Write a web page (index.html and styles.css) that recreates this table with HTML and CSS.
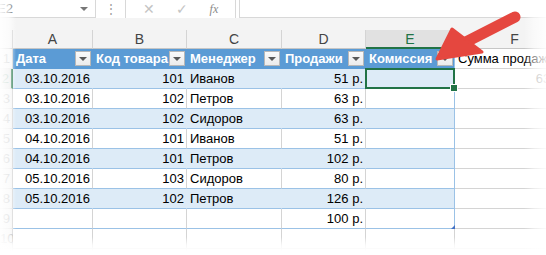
FILE: index.html
```html
<!DOCTYPE html>
<html lang="ru">
<head>
<meta charset="utf-8">
<link rel="stylesheet" href="styles.css">
</head>
<body>
<div class="page">
  <div class="fbar">
    <div class="namebox"><span class="nb-text">E2</span><span class="nb-arrow"></span></div>
    <div class="dots">⋮</div>
    <div class="fxbox"><span class="fxi">✕</span><span class="fxi">✓</span><span class="fxi fx">fx</span></div>
    <div class="finput"></div>
  </div>
  <div class="gap"></div>
  <div class="sheet">
    <div class="rh corner"></div>
    <div class="ch">A</div><div class="ch">B</div><div class="ch">C</div><div class="ch">D</div><div class="ch ch-sel">E</div><div class="ch">F</div>

    <div class="rh">1</div>
    <div class="c hdr"><span>Дата</span><span class="fb"></span></div>
    <div class="c hdr"><span>Код товара</span><span class="fb"></span></div>
    <div class="c hdr"><span>Менеджер</span><span class="fb"></span></div>
    <div class="c hdr"><span>Продажи</span><span class="fb"></span></div>
    <div class="c hdr hdr-last"><span>Комиссия</span><span class="fb"></span></div>
    <div class="c plain">Сумма продаж</div>

    <div class="rh rh-sel">2</div>
    <div class="c band r">03.10.2016</div><div class="c band r">101</div><div class="c band">Иванов</div><div class="c band r">51 р.</div><div class="c band last sel"></div><div class="c plain r ghost">630 р.</div>

    <div class="rh">3</div>
    <div class="c row r">03.10.2016</div><div class="c row r">102</div><div class="c row">Петров</div><div class="c row r">63 р.</div><div class="c row last"></div><div class="c plain"></div>

    <div class="rh">4</div>
    <div class="c band r">03.10.2016</div><div class="c band r">102</div><div class="c band">Сидоров</div><div class="c band r">63 р.</div><div class="c band last"></div><div class="c plain"></div>

    <div class="rh">5</div>
    <div class="c row r">04.10.2016</div><div class="c row r">101</div><div class="c row">Иванов</div><div class="c row r">51 р.</div><div class="c row last"></div><div class="c plain"></div>

    <div class="rh">6</div>
    <div class="c band r">04.10.2016</div><div class="c band r">101</div><div class="c band">Петров</div><div class="c band r">102 р.</div><div class="c band last"></div><div class="c plain"></div>

    <div class="rh">7</div>
    <div class="c row r">05.10.2016</div><div class="c row r">103</div><div class="c row">Сидоров</div><div class="c row r">80 р.</div><div class="c row last"></div><div class="c plain"></div>

    <div class="rh">8</div>
    <div class="c band r">05.10.2016</div><div class="c band r">102</div><div class="c band">Петров</div><div class="c band r">126 р.</div><div class="c band last"></div><div class="c plain"></div>

    <div class="rh">9</div>
    <div class="c row"></div><div class="c row"></div><div class="c row"></div><div class="c row r">100 р.</div><div class="c row last resize"></div><div class="c plain"></div>

    <div class="rh">10</div>
    <div class="c plain"></div><div class="c plain"></div><div class="c plain"></div><div class="c plain"></div><div class="c plain"></div><div class="c plain"></div>

    <div class="rh">11</div>
    <div class="c plain"></div><div class="c plain"></div><div class="c plain"></div><div class="c plain"></div><div class="c plain"></div><div class="c plain"></div>
  </div>

  <svg class="arrow" width="546" height="255" viewBox="0 0 546 255">
    <line x1="515" y1="17" x2="466" y2="42" stroke="#e5473f" stroke-width="11" stroke-linecap="round"/>
    <polygon points="452,29 437,59 482,52" fill="#e5473f" stroke="#e5473f" stroke-width="3" stroke-linejoin="round"/>
  </svg>
  <div class="fade fade-left"></div>
  <div class="fade fade-right"></div>
  <div class="fade fade-bottom"></div>
</div>
</body>
</html>
```
FILE: styles.css
```css
* { box-sizing: border-box; }
html, body { margin: 0; padding: 0; background: #fff; }
.page {
  position: relative;
  width: 546px;
  height: 255px;
  overflow: hidden;
  font-family: "Liberation Sans", Arial, sans-serif;
  font-size: 13px;
  color: #000;
}
.fbar {
  display: flex;
  height: 18px;
  background: #fff;
}
.namebox {
  width: 96px;
  display: flex;
  align-items: center;
  justify-content: space-between;
  padding: 0 7px 0 0;
  border-right: 1px solid #d8d8d8;
  border-bottom: 1px solid #d8d8d8;
}
.nb-text { color: #444; margin-left: -3px; font-size: 13px; }
.nb-arrow {
  width: 0; height: 0;
  border-left: 4px solid transparent;
  border-right: 4px solid transparent;
  border-top: 4px solid #777;
}
.dots { width: 29px; text-align: center; color: #9a9a9a; font-size: 12px; line-height: 18px; }
.fxbox {
  width: 111px;
  display: flex;
  align-items: center;
  justify-content: space-around;
  border-left: 1px solid #d8d8d8;
  border-right: 1px solid #d8d8d8;
  padding: 0 6px;
}
.fxi { color: #c4c4c4; font-size: 14px; }
.fx { font-family: "Liberation Serif", serif; font-style: italic; color: #8a8a8a; font-size: 12px; }
.finput { flex: 1; margin-left: 3px; border-left: 1px solid #d8d8d8; border-bottom: 1px solid #d8d8d8; }
.gap { height: 12px; background: #f4f4f4; }

.sheet {
  display: grid;
  grid-template-columns: 13px 80px 94px 95px 84px 89px 120px;
  grid-template-rows: 19px repeat(11, 20px);
}
.rh {
  background: #f3f3f3;
  color: #b0b0b0;
  border-right: 1px solid #d0d0d0;
  border-bottom: 1px solid #dedede;
  text-align: right;
  padding-right: 2px;
  line-height: 19px;
  font-size: 13px;
}
.rh.corner { border-bottom: 1px solid #c8c8c8; }
.rh-sel { background: #e2e2e2; border-right: 2px solid #217346; color: #8fb09c; }
.ch {
  background: #f3f3f3;
  color: #444;
  text-align: center;
  line-height: 19px;
  font-size: 14px;
  border-right: 1px solid #d4d4d4;
  border-bottom: 1px solid #c6c6c6;
}
.ch-sel {
  background: #e1e1e1;
  color: #217346;
  border-bottom: 2px solid #217346;
}
.c {
  display: flex;
  align-items: center;
  padding: 0 3px;
  white-space: nowrap;
  overflow: hidden;
  border-right: 1px solid #d4d4d4;
  border-bottom: 1px solid #d4d4d4;
}
.c.r { justify-content: flex-end; padding-right: 2px; }
.hdr {
  background: #5b9bd5;
  color: #fff;
  font-weight: bold;
  justify-content: space-between;
  padding-right: 1px;
  border-right: 1px solid #5b9bd5;
  border-bottom: 1px solid #5b9bd5;
}
.hdr-last { border-right: 1px solid #9bc2e6; }
.fb {
  width: 16px;
  height: 15px;
  flex: none;
  background: linear-gradient(#fafafa, #ececec);
  border: 1px solid #b8b8b8;
  position: relative;
}
.fb::after {
  content: "";
  position: absolute;
  left: 3px; top: 5px;
  border-left: 4px solid transparent;
  border-right: 4px solid transparent;
  border-top: 4px solid #595959;
}
.band {
  background: #ddebf7;
  border-right-color: #ddebf7;
  border-bottom-color: #9bc2e6;
}
.row { background: #fff; border-bottom-color: #9bc2e6; }
.last { border-right-color: #9bc2e6; }
.plain { background: #fff; }
.ghost { color: #888; padding-right: 6px; }
.sel { position: relative; overflow: visible; }
.sel::before {
  content: "";
  position: absolute;
  left: -1px; top: -1px; right: -1px; bottom: -1px;
  border: 2px solid #217346;
}
.sel::after {
  content: "";
  position: absolute;
  right: -4px; bottom: -4px;
  width: 6px; height: 6px;
  background: #217346;
  border: 1px solid #fff;
  z-index: 2;
}
.resize { position: relative; overflow: visible; }
.resize::after {
  content: "";
  position: absolute;
  right: -1px; bottom: -1px;
  border-left: 4px solid transparent;
  border-bottom: 4px solid #4472c4;
}
.arrow { position: absolute; left: 0; top: 0; pointer-events: none; }
.fade { position: absolute; pointer-events: none; }
.fade-left {
  left: 0; top: 0; bottom: 0; width: 16px;
  background: linear-gradient(to right, rgba(255,255,255,0.95) 0, rgba(255,255,255,0.7) 9px, rgba(255,255,255,0) 16px);
}
.fade-right {
  right: 0; top: 0; bottom: 0; width: 22px;
  background: linear-gradient(to right, rgba(255,255,255,0) 0, rgba(255,255,255,0.55) 10px, rgba(255,255,255,0.9) 22px);
}
.fade-bottom {
  left: 0; right: 0; bottom: 0; height: 18px;
  background: linear-gradient(to bottom, rgba(255,255,255,0) 0, rgba(255,255,255,0.8) 8px, #fff 14px);
}
```
